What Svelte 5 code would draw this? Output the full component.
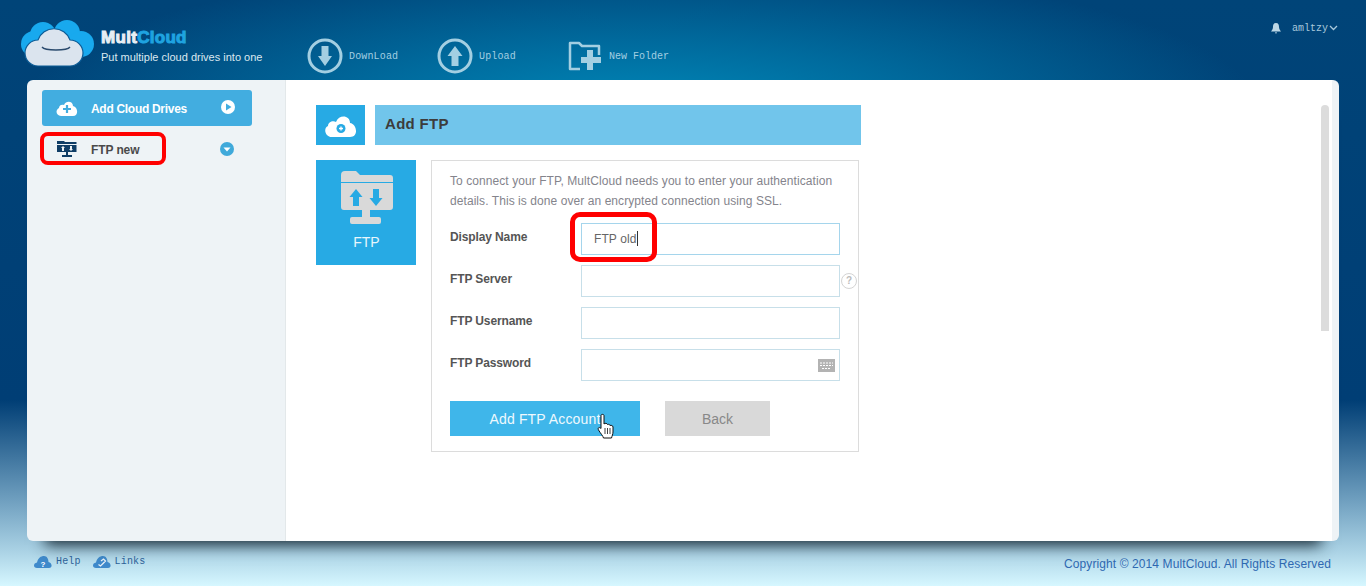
<script>
  const tools = [
    { label: "DownLoad", icon: "down" },
    { label: "Upload", icon: "up" },
    { label: "New Folder", icon: "folder" }
  ];
  const fields = [
    { label: "Display Name", value: "FTP old", active: true },
    { label: "FTP Server", help: true },
    { label: "FTP Username" },
    { label: "FTP Password", keyboard: true }
  ];
</script>

<div class="page">
  <header>
    <div class="logo">
      <svg width="74" height="48" viewBox="0 0 74 48">
        <g fill="#18a9ee">
          <circle cx="13" cy="24" r="13"/>
          <circle cx="22" cy="15" r="13"/>
          <circle cx="46" cy="13" r="13"/>
          <circle cx="60" cy="24" r="13"/>
        </g>
        <path d="M17 46A13 13 0 0 1 17 20 17 17 0 0 1 49 20 13 13 0 0 1 49 46Z" fill="#dbe4ee" stroke="#0d5c96" stroke-width="1.2"/>
        <path d="M21 27C24 31 46 31 49 27" fill="none" stroke="#2a4a6d" stroke-width="1.3"/>
      </svg>
      <div class="brand">
        <div class="name">Mult<span>Cloud</span></div>
        <div class="slogan">Put multiple cloud drives into one</div>
      </div>
    </div>

    <nav class="tools">
      {#each tools as tool}
        <div class="tool {tool.icon}">
          {#if tool.icon === "folder"}
            <svg width="34" height="30" viewBox="0 0 34 30">
              <path d="M12 28H2V2H11L14 5H31V14" fill="none" stroke="#a3cfe2" stroke-width="2.5" stroke-linejoin="round"/>
              <path d="M22 9V29M13 19H33" fill="none" stroke="#a3cfe2" stroke-width="6"/>
            </svg>
          {:else}
            <svg width="36" height="36" viewBox="0 0 36 36">
              <circle cx="18" cy="18" r="16" fill="none" stroke="#a3cfe2" stroke-width="3"/>
              {#if tool.icon === "down"}
                <path d="M14.500 8H21.500V18H25L18 28 11 18H14.500Z" fill="#a3cfe2"/>
              {:else}
                <path d="M14.500 28H21.500V18H25.500L18 8 10.500 18H14.500Z" fill="#a3cfe2"/>
              {/if}
            </svg>
          {/if}
          <span>{tool.label}</span>
        </div>
      {/each}
    </nav>

    <div class="user">
      <svg width="10" height="11" viewBox="0 0 10 11">
        <path d="M5 0C7.500 0 8 2 8 4 8 6 9 7 10 8.500H0C1 7 2 6 2 4 2 2 2.500 0 5 0ZM4 9.300H6L5 11Z" fill="#bcd7e6"/>
      </svg>
      <span class="uname">amltzy</span>
      <svg width="9" height="6" viewBox="0 0 9 6">
        <path d="M1 1L4.500 4.500 8 1" fill="none" stroke="#a9c9dc" stroke-width="1.300"/>
      </svg>
    </div>
  </header>

  <main class="card">
    <aside>
      <div class="add-drives">
        <svg width="22" height="16" viewBox="0 0 22 16">
          <path d="M5 16C0 16-1 10 3 8 3 5 6 4 8 5 10 0 17 1 17 6 22 7 23 16 17 16Z" fill="#fff"/>
          <path d="M11 5V13M7 9H15" stroke="#42ade0" stroke-width="2.200"/>
        </svg>
        <span>Add Cloud Drives</span>
        <svg class="go" width="14" height="14" viewBox="0 0 14 14">
          <circle cx="7" cy="7" r="7" fill="#fff"/>
          <path d="M5 3.500L10.500 7 5 10.500Z" fill="#42ade0"/>
        </svg>
      </div>
      <div class="drive">
        <svg width="20" height="18" viewBox="0 0 20 18">
          <path d="M0 2V1H7L8 2H19.500V4H0ZM0 5H19.500V12H11V15H15V17H5V15H9V12H0Z" fill="#0f3d66"/>
          <path d="M6 6L8 8H7V11H5V8H4ZM14 11L12 9H13V6H15V9H16Z" fill="#eef3f6"/>
        </svg>
        <span>FTP new</span>
        <svg class="more" width="14" height="14" viewBox="0 0 14 14">
          <circle cx="7" cy="7" r="7" fill="#3fa9da"/>
          <path d="M3.500 5.500H10.500L7 9.500Z" fill="#fff"/>
        </svg>
      </div>
      <div class="mark mark-drive"></div>
    </aside>

    <section class="content">
      <div class="title-row">
        <div class="title-icon">
          <svg width="32" height="23" viewBox="0 0 32 23">
            <path d="M7 23C0 23-2 14 3 12 3 8 8 6 11 8 14 0 25 1 25 9 32 10 34 23 25 23Z" fill="#fff"/>
            <circle cx="16" cy="14.500" r="4.500" fill="#27aae4"/>
            <path d="M16 12.500V16.500M14 14.500H18" stroke="#fff" stroke-width="1.300"/>
          </svg>
        </div>
        <h2>Add FTP</h2>
      </div>

      <div class="body-row">
        <div class="tile">
          <svg width="52" height="53" viewBox="0 0 52 53">
            <path d="M0 4Q0 0 4 0H15L19 4H49Q52 4 52 7V11H0Z" fill="#d9d9d9"/>
            <path d="M0 12H52V36Q52 39 49 39H29V46H38Q40 46 40 48V51Q40 53 38 53H11Q9 53 9 51V48Q9 46 11 46H21V39H3Q0 39 0 36Z" fill="#d9d9d9"/>
            <path d="M15 18L21.500 26H18V35H12V26H8.500ZM32 18H38V27H41.500L35 35 28.500 27H32Z" fill="#27aae4"/>
          </svg>
          <span>FTP</span>
        </div>

        <form class="panel">
          <p>To connect your FTP, MultCloud needs you to enter your authentication details. This is done over an encrypted connection using SSL.</p>
          {#each fields as field}
            <div class="field">
              <label for={field.label}>{field.label}</label>
              <div class="input" class:active={field.active} id={field.label}>
                {#if field.value}{field.value}<i class="caret"></i>{/if}
                {#if field.keyboard}
                  <svg class="kbd" width="17" height="13" viewBox="0 0 17 13">
                    <rect width="17" height="13" fill="#b3b3b3"/>
                    <path d="M2 4H15M2 6.500H15M4 9.500H13" stroke="#fff" stroke-width="1.200" stroke-dasharray="2 1"/>
                  </svg>
                {/if}
              </div>
              {#if field.help}
                <div class="help">?</div>
              {/if}
            </div>
          {/each}
          <div class="actions">
            <div class="btn primary">Add FTP Account</div>
            <div class="btn back">Back</div>
          </div>
          <svg class="cursor" width="17" height="26" viewBox="0 0 17 26">
            <path d="M4 2.500C4 1 7 1 7 2.500V11C8 10 10 10 10.500 11.500 11.500 11 13 11.500 13 12.500 14 12 16 12.500 16 14V19C16 21 15 23 14.500 25H6.500C6 23 4 21 1.500 17 .500 15 2 13.500 4 15.500Z" fill="#fff" stroke="#111" stroke-width="1"/>
            <path d="M8 15V21M10.500 15V21M13 15V21" stroke="#111" stroke-width=".8"/>
          </svg>
          <div class="mark mark-field"></div>
        </form>
      </div>
      <div class="scroll"></div>
    </section>
    <div class="strip"></div>
  </main>

  <footer>
    <div class="foot-links">
      <div class="foot-link">
        <svg width="18" height="12" viewBox="0 0 18 12">
          <path d="M3 12C-1 12-1 7 3 6.500 4 2 7 0 10 0 13 0 14.500 3 14.500 6 18 6.500 19 12 15 12Z" fill="#3f8acb"/>
          <text x="9" y="10.500" text-anchor="middle" class="q">?</text>
        </svg>
        <span>Help</span>
      </div>
      <div class="foot-link">
        <svg width="18" height="12" viewBox="0 0 18 12">
          <path d="M3 12C-1 12-1 7 3 6.500 4 2 7 0 10 0 13 0 14.500 3 14.500 6 18 6.500 19 12 15 12Z" fill="#3f8acb"/>
          <path d="M5.500 8.500L7.500 10 10 7.500M8 5L10.500 3 12.500 5 10 7.500" fill="none" stroke="#e6f0f8" stroke-width="1.300"/>
        </svg>
        <span>Links</span>
      </div>
    </div>
    <div class="copyright">Copyright © 2014 MultCloud. All Rights Reserved</div>
  </footer>
</div>

<style>
  :global(body) {
    margin: 0;
  }

  .page {
    width: 1366px;
    height: 586px;
    overflow: hidden;
    display: flex;
    flex-direction: column;
    font-family: "Liberation Sans", Arial, sans-serif;
    background:
      radial-gradient(ellipse 620px 150px at 640px 110px, #0089b9 0%, rgba(0, 120, 170, 0.75) 45%, rgba(0, 70, 125, 0) 100%),
      linear-gradient(180deg, #004478 0%, #003e75 400px, #6f9fbf 500px, #a9d1e4 550px, #d6f7ff 586px);
  }

  header {
    height: 80px;
    flex: none;
    display: flex;
    position: relative;
  }

  .logo {
    display: flex;
    width: 285px;
    padding: 20px 0 0 21px;
    box-sizing: border-box;
    gap: 6px;
  }

  .brand {
    padding-top: 7px;
  }

  .name {
    font-size: 17px;
    line-height: 22px;
    font-weight: bold;
    color: #e8eef4;
    -webkit-text-stroke: 1px currentColor;
    letter-spacing: 0.3px;
  }

  .name span {
    color: #1fa3e0;
  }

  .slogan {
    font-size: 11px;
    line-height: 14px;
    margin-top: 1px;
    color: #dbe8f0;
    white-space: nowrap;
  }

  .tools {
    display: flex;
    padding: 38px 0 0 22px;
    height: 36px;
  }

  .tool {
    display: flex;
    align-items: center;
    gap: 6px;
    font: 10px/12px "Liberation Mono", monospace;
    letter-spacing: 0.15px;
    color: #a3cfe2;
    width: 130px;
    white-space: nowrap;
  }

  .tool span {
    padding-top: 1px;
  }

  .tool.folder {
    padding-left: 1px;
    gap: 7px;
    letter-spacing: 0;
  }

  .user {
    margin-left: auto;
    display: flex;
    align-items: center;
    height: 14px;
    padding: 21px 28px 0 0;
    color: #a9c9dc;
    font: 10px/12px "Liberation Mono", monospace;
  }

  .uname {
    margin: 0 1px 0 11px;
    padding-top: 1px;
  }

  .card {
    width: 1312px;
    height: 461px;
    flex: none;
    margin-left: 27px;
    display: flex;
    position: relative;
    border-radius: 6px;
    background: #eef3f6;
    box-shadow: 0 22px 14px -18px rgba(10, 25, 35, 0.9);
  }

  aside {
    width: 259px;
    flex: none;
    padding: 10px 0 0 15px;
    box-sizing: border-box;
    border-right: 1px solid #e3e8ea;
    position: relative;
  }

  .add-drives {
    width: 210px;
    height: 36px;
    display: flex;
    align-items: center;
    box-sizing: border-box;
    padding: 0 17px 0 14px;
    border-radius: 3px;
    background: #42ade0;
    color: #fff;
    font-size: 12px;
    font-weight: bold;
    letter-spacing: -0.3px;
  }

  .add-drives span {
    margin-left: 13px;
    padding-top: 2px;
  }

  .go {
    margin-left: auto;
    margin-top: -2px;
  }

  .drive {
    display: flex;
    align-items: center;
    width: 210px;
    height: 34px;
    padding: 0 18px 0 15px;
    color: #4a4a4a;
    font-size: 12px;
    font-weight: bold;
    box-sizing: border-box;
    margin-top: 6px;
  }

  .drive span {
    margin-left: 14px;
    padding-top: 2px;
    letter-spacing: -0.1px;
  }

  .more {
    margin-left: auto;
    margin-top: -1px;
  }

  .mark {
    position: absolute;
    border: 4px solid #f00;
    border-radius: 8px;
    box-sizing: border-box;
    pointer-events: none;
  }

  .mark-drive {
    left: 13px;
    top: 52px;
    width: 126px;
    height: 33px;
  }

  .content {
    flex: 1;
    background: #fff;
    padding: 25px 0 0 30px;
    position: relative;
  }

  .title-row {
    display: flex;
    gap: 10px;
  }

  .title-icon {
    width: 49px;
    height: 40px;
    background: #27aae4;
    display: flex;
    align-items: center;
    justify-content: center;
  }

  h2 {
    margin: 0;
    width: 476px;
    height: 40px;
    padding-left: 10px;
    background: #71c5eb;
    font-size: 15px;
    line-height: 38px;
    letter-spacing: 0.3px;
    color: #3c3c3c;
  }

  .body-row {
    display: flex;
    align-items: flex-start;
    margin-top: 15px;
    gap: 15px;
  }

  .tile {
    width: 100px;
    height: 105px;
    background: #27aae4;
    display: flex;
    flex-direction: column;
    align-items: center;
    padding: 11px 0 0 1px;
    box-sizing: border-box;
    color: #e8f6fc;
    font-size: 14px;
  }

  .tile span {
    margin-top: 10px;
  }

  .panel {
    width: 428px;
    height: 292px;
    box-sizing: border-box;
    border: 1px solid #dcdcdc;
    padding: 10px 18px 0;
    position: relative;
  }

  p {
    margin: 0 0 12px;
    font-size: 12px;
    line-height: 20px;
    letter-spacing: 0.07px;
    color: #84848c;
  }

  .field {
    display: flex;
    height: 42px;
    position: relative;
  }

  label {
    width: 131px;
    font-size: 12px;
    line-height: 28px;
    font-weight: bold;
    letter-spacing: -0.12px;
    color: #555;
  }

  .input {
    width: 259px;
    height: 32px;
    box-sizing: border-box;
    border: 1px solid #c7dfe9;
    padding-left: 12px;
    position: relative;
    font-size: 12px;
    line-height: 31px;
    letter-spacing: 0.1px;
    color: #666;
  }

  .input.active {
    border-color: #a5d5ec;
  }

  .caret {
    display: inline-block;
    width: 1px;
    height: 15px;
    background: #333;
    vertical-align: -3px;
  }

  .kbd {
    position: absolute;
    right: 4px;
    top: 9px;
  }

  .help {
    position: absolute;
    left: 391px;
    top: 8px;
    width: 14px;
    height: 14px;
    border: 1px solid #d4d4d4;
    border-radius: 50%;
    color: #bbb;
    font-size: 10px;
    font-weight: bold;
    line-height: 14px;
    text-align: center;
  }

  .actions {
    display: flex;
    gap: 25px;
    margin-top: 10px;
  }

  .btn {
    height: 35px;
    line-height: 37px;
    text-align: center;
    font-size: 14px;
  }

  .primary {
    width: 190px;
    background: #3fb6ea;
    color: #eef9fe;
    letter-spacing: 0.15px;
  }

  .back {
    width: 105px;
    background: #d9d9d9;
    color: #888;
  }

  .cursor {
    position: absolute;
    left: 165px;
    top: 252px;
  }

  .mark-field {
    left: 138px;
    top: 51px;
    width: 87px;
    height: 50px;
    border-width: 5px;
    border-radius: 10px;
  }

  .scroll {
    position: absolute;
    right: 3px;
    top: 25px;
    width: 8px;
    height: 226px;
    border-radius: 4px 4px 0 0;
    background: #dcdcdc;
  }

  .strip {
    width: 7px;
    flex: none;
  }

  footer {
    flex: 1;
    display: flex;
    justify-content: space-between;
    align-items: center;
    padding: 0 35px 0 34px;
  }

  .foot-links {
    display: flex;
    gap: 12px;
    margin-top: -4px;
  }

  .foot-link {
    display: flex;
    align-items: center;
    gap: 4px;
    color: #2d6299;
    font: 10px/12px "Liberation Mono", monospace;
    letter-spacing: 0.15px;
  }

  .q {
    font: bold 8px "Liberation Sans", sans-serif;
    fill: #fff;
  }

  .copyright {
    font-size: 12px;
    letter-spacing: 0.1px;
    color: #2f69b2;
  }
</style>
